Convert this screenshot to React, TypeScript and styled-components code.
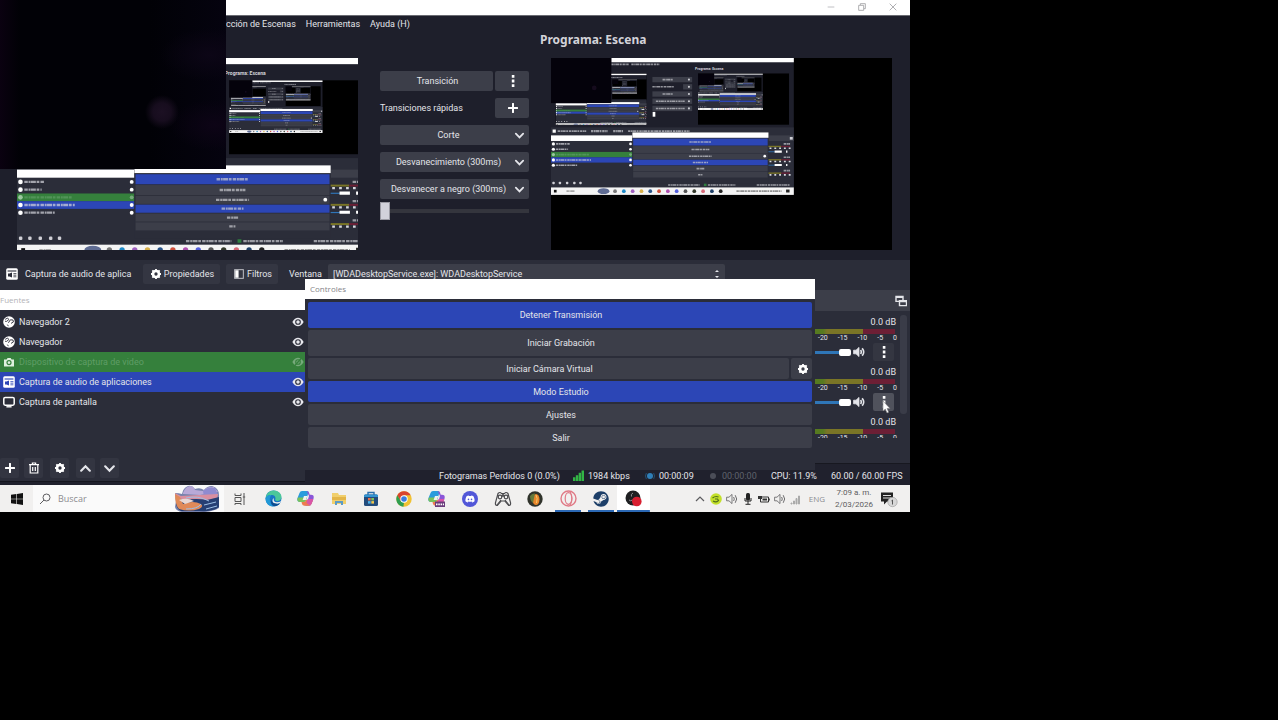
import React from "react";
import styled, { createGlobalStyle, css } from "styled-components";
import { FaDiscord, FaSteam } from "react-icons/fa";

const c = {
  base: "#1e1f2b",
  dock: "#2b2d39",
  button: "#3c3e49",
  blue: "#2c46b6",
  green: "#35803c",
  text: "#e4e5ea",
};

const GlobalStyle = createGlobalStyle`
  * { box-sizing: border-box; }
  body { margin: 0; background: #000; font-family: Roboto, "Open Sans", sans-serif; font-size: 9px; line-height: 12px; color: ${c.text}; }
  button, input, select { font: inherit; color: inherit; margin: 0; }
  svg { display: block; flex: none; }
  h1, h2, p, ul { margin: 0; padding: 0; font-weight: inherit; font-size: inherit; }
`;

const Page = styled.div`
  min-height: 100vh;
  padding-right: 368px;
  background: #000;
`;

const Desktop = styled.main`
  position: relative;
  min-width: 860px;
  background: ${c.base};
  overflow: hidden;
`;

const TitleBar = styled.header`
  height: 16px;
  display: flex;
  justify-content: flex-end;
  background: #fff;
  border-bottom: 1px solid #6a6b72;
`;

const WindowButton = styled.button`
  width: 31px;
  height: 14px;
  padding: 0;
  border: 0;
  background: none;
  display: grid;
  place-items: center;
  color: #a2a2a6;
`;

const WindowButtons = styled.div`
  display: flex;
  padding-right: 2px;
`;

const MenuBar = styled.nav`
  height: 16px;
  display: flex;
  align-items: center;
  gap: 10px;
  padding-left: 226px;
`;

const MenuItem = styled.button`
  padding: 0;
  border: 0;
  background: none;
  white-space: nowrap;
`;

const Camera = styled.div`
  position: absolute;
  left: 0;
  top: 0;
  width: 226px;
  height: 169px;
  z-index: 4;
  background:
    radial-gradient(circle at 162px 112px, #1c1023 0, #170d1e 9px, transparent 17px),
    radial-gradient(ellipse at 210px 55px, #0c0616 0, transparent 50px),
    radial-gradient(ellipse at 215px 125px, #0d0416 0, transparent 45px),
    linear-gradient(90deg, #0a0110 0, #010106 20px, #010106 150px, #05030f 100%);
`;

const Studio = styled.section`
  height: 228px;
  display: flex;
`;

const Pane = styled.div<{ $program?: boolean }>`
  flex: 1;
  min-width: 0;
  padding: ${(p) => (p.$program ? "0 18px 0 21px" : "0 22px 0 17px")};
`;

const PaneTitle = styled.h1`
  height: 26px;
  margin-left: -11px;
  font-family: "Noto Sans", "Open Sans", sans-serif;
  font-size: 12px;
  line-height: 16px;
  font-weight: 700;
  color: #d3d3d9;
`;

const Canvas = styled.div`
  background: #000;
  height: 192px;
  overflow: hidden;
  & > svg { width: 100%; height: 192px; }
`;

const Transitions = styled.div`
  width: 150px;
  padding: 39px 1px 0 0;
  display: flex;
  flex-direction: column;
  gap: 7px;
`;

const Row = styled.div`
  display: flex;
  align-items: center;
  gap: 2px;
`;

const Grow = styled.span`
  flex: 1;
`;

const Button = styled.button<{ $w?: number; $h?: number; $on?: boolean; $grow?: boolean }>`
  height: ${(p) => p.$h ?? 20}px;
  ${(p) => p.$w && css`width: ${p.$w}px;`}
  ${(p) => p.$grow && css`flex: 1;`}
  padding: 0 4px 0 6px;
  border: 0;
  border-radius: 2px;
  display: flex;
  align-items: center;
  justify-content: center;
  gap: 3px;
  white-space: nowrap;
  background: ${(p) => (p.$on ? c.blue : c.button)};
`;

const Fade = styled.input`
  appearance: none;
  width: 100%;
  height: 18px;
  margin-top: -4px;
  background: linear-gradient(#34353d, #34353d) center / 100% 4px no-repeat;
  &::-webkit-slider-thumb {
    appearance: none;
    width: 10px;
    height: 18px;
    border: 1px solid #9b9ba3;
    background: #d2d2da;
  }
`;

const ContextBar = styled.section`
  height: 30px;
  padding: 0 0 2px 6px;
  display: flex;
  align-items: center;
  background: ${c.dock};
`;

const ContextName = styled.h2`
  width: 107px;
  margin: 0 11px 0 7px;
  white-space: nowrap;
`;

const ContextButton = styled(Button)`
  margin-right: 6px;
  background: #343642;
`;

const WindowLabel = styled.label`
  display: flex;
  align-items: center;
  gap: 6px;
  margin-left: 5px;
`;

const SelectBox = styled.span`
  display: flex;
  align-items: center;
  width: 397px;
  padding-right: 4px;
  background: ${c.button};
  border-radius: 2px;
`;

const Select = styled.select`
  appearance: none;
  flex: 1;
  height: 20px;
  padding: 0 5px;
  border: 0;
  background: none;
`;

const Docks = styled.section`
  position: relative;
  height: 174px;
  display: flex;
  justify-content: flex-end;
  background: ${c.dock};
`;

const FloatingSources = styled.section`
  position: absolute;
  left: 0;
  top: 0;
  width: 305px;
  height: 192px;
  z-index: 2;
  display: flex;
  flex-direction: column;
  background: ${c.dock};
  border-bottom: 1px solid #15161e;
`;

const FloatingControls = styled.section`
  position: absolute;
  left: 305px;
  right: 95px;
  top: -11px;
  height: 191px;
  z-index: 3;
  background: ${c.dock};
`;

const DockTitle = styled.h2<{ $pad: number; $faint?: boolean }>`
  height: 20px;
  padding-left: ${(p) => p.$pad}px;
  line-height: 20px;
  font-family: "Open Sans", sans-serif;
  font-size: 8px;
  background: #fff;
  color: ${(p) => (p.$faint ? "#b4b4b8" : "#85858a")};
`;

const ControlList = styled.div`
  padding: 3px;
  display: flex;
  flex-direction: column;
  gap: 2px;
`;

const SourceList = styled.ul`
  flex: 1;
  padding-top: 2px;
  list-style: none;
`;

const Source = styled.li<{ $tone?: "green" | "blue" }>`
  height: 20px;
  padding: 0 1px 0 3px;
  display: flex;
  align-items: center;
  gap: 4px;
  background: ${(p) => (p.$tone === "green" ? c.green : p.$tone === "blue" ? c.blue : "none")};
  color: ${(p) => (p.$tone === "green" ? "#5f9d66" : "inherit")};
`;

const EyeButton = styled.button`
  padding: 0;
  border: 0;
  background: none;
`;

const Tools = styled.div`
  display: flex;
  gap: 5px;
  padding-bottom: 3px;
`;

const Tool = styled.button`
  width: 19px;
  height: 20px;
  padding: 0;
  border: 0;
  border-radius: 2px;
  display: grid;
  place-items: center;
  background: #333541;
  &:nth-child(3) { margin: 0 2px; }
`;

const Mixer = styled.section`
  width: 95px;
  height: 174px;
  border-bottom: 1px solid #171820;
`;

const MixerHead = styled.header`
  height: 21px;
  padding-right: 3px;
  display: flex;
  align-items: center;
  justify-content: flex-end;
  background: ${c.button};
`;

const MixerBody = styled.div`
  display: flex;
  height: 127px;
  overflow: hidden;
`;

const Channels = styled.div`
  width: 85px;
`;

const Channel = styled.div`
  height: 50px;
  padding-top: 5px;
`;

const Level = styled.p`
  padding-right: 4px;
  text-align: right;
`;

const Meter = styled.div`
  height: 5px;
  width: 80px;
  margin-top: 1px;
  background: linear-gradient(90deg, #567a20 0 8px, #7a7526 12px 48px, #6c1f35 48px);
`;

const Ticks = styled.div`
  height: 9px;
  width: 84px;
  padding: 0 2px 0 3px;
  display: flex;
  justify-content: space-between;
  font-size: 7px;
  line-height: 9px;
`;

const VolumeRow = styled.div`
  display: flex;
  align-items: center;
  height: 18px;
`;

const Volume = styled.input`
  appearance: none;
  width: 36px;
  height: 10px;
  background: linear-gradient(#2f76b8, #2f76b8) center / 100% 3px no-repeat;
  &::-webkit-slider-thumb {
    appearance: none;
    width: 12px;
    height: 7px;
    border-radius: 2px;
    background: #fff;
  }
`;

const Mute = styled.button`
  margin: 0 8px 0 2px;
  padding: 0;
  border: 0;
  background: none;
`;

const More = styled.button<{ $hover?: boolean }>`
  width: 21px;
  height: 18px;
  padding: 0;
  border: 0;
  border-radius: 2px;
  display: grid;
  place-items: center;
  background: ${(p) => (p.$hover ? "#50525c" : "#343641")};
`;

const ScrollTrack = styled.div`
  width: 7px;
  height: 99px;
  margin: 4px 0 0 0;
  border-radius: 3px;
  background: #3a3c48;
`;

const Pointer = styled.div`
  position: absolute;
  right: 19px;
  top: 110px;
  z-index: 5;
`;

const StatusBar = styled.footer`
  height: 21px;
  padding: 2px 13px 0 0;
  display: flex;
  justify-content: flex-end;
  align-items: center;
  background: #20212d;
`;

const Status = styled.span<{ $w: number; $dim?: boolean }>`
  width: ${(p) => p.$w}px;
  display: flex;
  align-items: center;
  gap: 4px;
  white-space: nowrap;
  color: ${(p) => (p.$dim ? "#5f616c" : "inherit")};
`;

const Taskbar = styled.footer`
  height: 27px;
  display: flex;
  align-items: center;
  background: #f1f0ef;
  color: #5d5d60;
  font-family: "Open Sans", sans-serif;
`;

const StartButton = styled.button`
  width: 33px;
  height: 27px;
  padding: 0;
  border: 0;
  display: grid;
  place-items: center;
  background: none;
`;

const Search = styled.label`
  width: 191px;
  height: 27px;
  padding: 0 4px 0 6px;
  display: flex;
  align-items: center;
  gap: 7px;
  background: #fafafa;
`;

const SearchInput = styled.input`
  flex: 1;
  min-width: 0;
  padding: 0;
  border: 0;
  background: none;
  &::placeholder { color: #8c8c90; opacity: 1; }
`;

const Apps = styled.div`
  width: 426px;
  display: flex;
`;

const AppButton = styled.button<{ $open?: boolean; $active?: boolean }>`
  flex: 1;
  height: 27px;
  padding: 0;
  border: 0;
  display: grid;
  place-items: center;
  background:
    ${(p) => (p.$open ? `linear-gradient(#2b68b4, #2b68b4) bottom / ${p.$active ? "100%" : "26px"} 2px no-repeat,` : "")}
    ${(p) => (p.$active ? "#fff" : "transparent")};
`;

const Tray = styled.div`
  margin-left: auto;
  padding-right: 12px;
  display: flex;
  align-items: center;
  gap: 4px;
`;

const Lang = styled.span`
  width: 22px;
  text-align: center;
  font-size: 8px;
  color: #8b8b8f;
`;

const Clock = styled.p`
  width: 44px;
  text-align: center;
  font-family: Roboto, sans-serif;
  font-size: 8px;
  line-height: 12px;
`;

/* ---------- icons ---------- */

const Svg = ({ s = 12, h, vb = 12, children }: { s?: number; h?: number; vb?: number; children: React.ReactNode }) => (
  <svg width={s} height={h ?? s} viewBox={`0 0 ${vb} ${vb}`} fill="none" stroke="currentColor" aria-hidden="true">
    {children}
  </svg>
);

const Chevron = ({ up, s = 10 }: { up?: boolean; s?: number }) => (
  <Svg s={s}><path d={up ? "M2 8 6 4l4 4" : "M2 4l4 4 4-4"} strokeWidth="2" strokeLinecap="round" /></Svg>
);
const Dots = () => (
  <Svg><path d="M4.8 0h2.6v2.8H4.8zM4.8 4.6h2.6v2.8H4.8zM4.8 9.2h2.6V12H4.8z" fill="#fff" stroke="none" /></Svg>
);
const Plus = () => <Svg s={10}><path d="M6 1v10M1 6h10" stroke="#fff" strokeWidth="2.4" strokeLinecap="round" /></Svg>;
const Gear = () => (
  <Svg s={10}>
    <circle cx="6" cy="6" r="3.6" stroke="#fff" strokeWidth="3.2" />
    <path d="M6 0v2M6 10v2M0 6h2M10 6h2M1.6 1.6l1.4 1.4M9 9l1.4 1.4M1.6 10.4 3 9M9 3l1.4-1.4" stroke="#fff" strokeWidth="2.2" />
  </Svg>
);
const Globe = () => (
  <Svg>
    <circle cx="6" cy="6" r="5.8" fill="#fff" stroke="none" />
    <path d="M2.2 3.4 4.6 2l1.2 1.6L3.6 5.4 2 5.2M5.4 6.8l2-3 2.6.2.4 2-2.4 1.4M4.4 8.6l1 1.6" stroke={c.dock} strokeWidth="0.9" />
  </Svg>
);
const CameraIcon = () => (
  <Svg>
    <path d="M1 3.4h2.6L4.6 2h3l1 1.4H11v7H1z" fill="#dff0df" stroke="none" />
    <circle cx="6" cy="6.6" r="2" stroke={c.green} strokeWidth="1.2" />
  </Svg>
);
const AudioIcon = ({ bg }: { bg: string }) => (
  <Svg>
    <rect x="0.2" y="0.2" width="11.6" height="11.6" rx="1.5" fill="#fff" stroke="none" />
    <path d="M1.600 3h8.800" stroke={bg} strokeWidth="1.1" />
    <path d="M2 5.600h1.500L6 4.600v4.800L3.500 8.400H2z" fill={bg} stroke="none" />
    <path d="M7.400 5.600h3M7.400 7.200h3M7.400 8.800h3" stroke={bg} strokeWidth="0.8" />
  </Svg>
);
const Monitor = () => (
  <Svg>
    <rect x="0.8" y="1.4" width="10.4" height="7.8" rx="1.4" stroke="#fff" strokeWidth="1.5" />
    <path d="M3.4 10.8h5.2" stroke="#fff" strokeWidth="1.4" />
  </Svg>
);
const Eye = ({ off }: { off?: boolean }) => (
  <Svg s={12}>
    <path d="M0.4 6C2 2.800 4 1.800 6 1.800S10 2.800 11.600 6C10 9.200 8 10.200 6 10.200S2 9.200 .4 6z" fill={off ? "#76a97b" : "#e8e8ee"} stroke="none" />
    <circle cx="6" cy="6" r="2.300" stroke={off ? c.green : c.dock} strokeWidth="1.1" />
    {off && <path d="M2 10.5 10 1.5" stroke={c.green} strokeWidth="1.3" />}
  </Svg>
);
const Trash = () => (
  <Svg s={12}><path d="M1 2.6h10M4.4 2.4V1h3.200v1.4M2.2 3v8h7.600V3M4.700 5v4M7.300 5v4" stroke="#fff" strokeWidth="1.2" /></Svg>
);
const FilterIcon = () => (
  <Svg s={10}>
    <rect x="0.8" y="0.8" width="10.4" height="10.4" stroke="#bfc0c6" strokeWidth="1.2" />
    <path d="M1.5 1.5h4v9h-4z" fill="#fff" stroke="none" />
  </Svg>
);
const Popout = () => (
  <Svg>
    <path d="M1 1.4h7v5H1zM1 2.2h7" strokeWidth="1.4" />
    <path d="M4.5 5.6h7v5h-7zM4.5 6.6h7" strokeWidth="1.4" fill={c.button} />
  </Svg>
);
const Speaker = ({ bold = true }: { bold?: boolean }) => (
  <Svg>
    <path d="M.6 4.2H3L6 1.4v9.2L3 7.8H.6z" fill={bold ? "currentColor" : "none"} strokeWidth="0.8" />
    <path d="M7.6 4q1.4 2 0 4M9.2 2.2q3 3.8 0 7.6" strokeWidth={bold ? 1.6 : 0.9} />
  </Svg>
);
const SpinArrows = () => (
  <Svg s={8} h={12}><path d="M3 3 6 0 9 3zM3 9 6 12 9 9z" fill="currentColor" stroke="none" /></Svg>
);
const Signal = () => (
  <Svg s={11}><path d="M0 8h2.6v4H0zM3.1 5.6h2.6V12H3.1zM6.2 3h2.6v9H6.2zM9.3.6H12V12H9.3z" fill="#32b545" stroke="none" /></Svg>
);
const Dot = ({ color, ring }: { color: string; ring?: string }) => (
  <Svg s={10}>
    <circle cx="6" cy="6" r="3.6" fill={color} stroke="none" />
    {ring && <path d="M1.6 2.5q-2 3.5 0 7M10.4 2.5q2 3.5 0 7" stroke={ring} />}
  </Svg>
);

/* ---------- scaled-down capture of the desktop ---------- */

const Scribble = ({ x, y, w, color = "#c9cad0", t = 6 }: { x: number; y: number; w: number; color?: string; t?: number }) => (
  <path d={`M${x} ${y}h${w}`} stroke={color} strokeWidth={t} strokeDasharray="9 2 5 1 13 2 7 3" opacity="0.7" />
);

const Capture = ({ depth, title }: { depth: number; title?: boolean }) => (
  <g>
    <rect width="910" height="513" fill={c.base} />
    <rect x="226" width="684" height="16" fill="#fff" />
    <Scribble x={226} y={24} w={65} />
    <Scribble x={301} y={24} w={105} />
    {title ? (
      <text x="540" y="45" fontSize="13" fontWeight="700" fill="#d3d3d9">Programa: Escena</text>
    ) : (
      <Scribble x={540} y={40} w={111} t={9} />
    )}
    <rect x="17" y="58" width="341" height="192" />
    <rect x="551" y="58" width="341" height="192" />
    {depth > 0 && (
      <>
        <svg x="17" y="58" width="341" height="192" viewBox="0 0 886 499"><Capture depth={depth - 1} /></svg>
        <svg x="551" y="58" width="341" height="192" viewBox="0 0 1278 720"><Capture depth={depth - 1} /></svg>
      </>
    )}
    <rect width="226" height="169" fill="#04020b" />
    <circle cx="162" cy="112" r="9" fill="#150b1d" />
    {[71, 98, 125, 152, 179].map((y, i) => (
      <g key={y}>
        <rect x={i === 1 ? 495 : 380} y={y} width={i === 1 ? 34 : 149} height="20" fill={c.button} />
        <Scribble x={i === 1 ? 380 : i > 2 ? 393 : 418} y={y + 10} w={i === 1 ? 80 : i > 2 ? 108 : 38} />
        <circle cx="517" cy={y + 10} r="4" fill="#c9cad0" />
      </g>
    ))}
    <rect x="381" y="202" width="10" height="18" fill="#fff" />
    <rect y="260" width="910" height="225" fill={c.dock} />
    <rect x="6" y="268" width="12" height="12" fill="#fff" />
    <Scribble x={25} y={274} w={107} />
    <Scribble x={150} y={274} w={62} t={8} />
    <Scribble x={233} y={274} w={37} t={8} />
    <Scribble x={289} y={274} w={230} />
    <rect x="815" y="290" width="95" height="21" fill={c.button} />
    <rect x="895" y="296" width="11" height="10" fill="#d0d0d6" />
    <rect y="290" width="305" height="21" fill="#fff" />
    <rect y="352" width="305" height="20" fill={c.green} />
    <rect y="372" width="305" height="20" fill={c.blue} />
    {[322, 342, 362, 382, 402].map((y, i) => (
      <g key={y}>
        <circle cx="9" cy={y} r="6" fill={i === 2 ? "#9bc79f" : "#fff"} />
        <Scribble x={19} y={y} w={[52, 45, 125, 131, 79][i]} color={i === 2 ? "#5f9d66" : "#d6d7de"} />
        <circle cx="298" cy={y} r="5" fill={i === 2 ? "#76a97b" : "#fff"} />
      </g>
    ))}
    {[9, 33, 60, 87, 110].map((x) => <rect key={x} x={x - 4} y="464" width="9" height="9" rx="3" fill="#d0d0d6" />)}
    <rect x="305" y="279" width="510" height="191" fill={c.dock} />
    <rect x="305" y="279" width="510" height="20" fill="#fff" />
    {[[302, 26, 83], [330, 26, 67], [358, 21, 86], [381, 21, 57], [404, 21, 29], [427, 21, 17]].map(([y, h, w], i) => (
      <g key={y}>
        <rect x="308" y={y} width="504" height={h} fill={i === 0 || i === 3 ? c.blue : c.button} />
        <Scribble x={560 - w / 2} y={y + h / 2} w={w} />
      </g>
    ))}
    <circle cx="801" cy="368" r="5" fill="#fff" />
    {[322, 372, 422].map((y) => (
      <g key={y}>
        <Scribble x={872} y={y} w={24} />
        <rect x="815" y={y + 7} width="48" height="5" fill="#7a7526" />
        <rect x="863" y={y + 7} width="33" height="5" fill="#6c1f35" />
        <path d={`M819 ${y + 16}h80`} stroke="#d6d7de" strokeWidth="6" strokeDasharray="7 11" />
        {y < 400 && (
          <>
            <rect x="815" y={y + 28} width="24" height="3" fill="#2f76b8" />
            <path d={`M838 ${y + 29}h27M881 ${y + 29}h5`} stroke="#fff" strokeWidth="8" />
          </>
        )}
      </g>
    ))}
    <Scribble x={439} y={476} w={118} />
    <rect x="573" y="471" width="10" height="9" fill="#32b545" opacity="0.6" />
    <Scribble x={588} y={476} w={103} />
    <Scribble x={771} y={476} w={126} />
    <rect y="485" width="910" height="28" fill="#f4f4f4" />
    <rect x="11" y="494" width="10" height="10" fill="#111" />
    <Scribble x={58} y={499} w={30} color="#888" />
    <ellipse cx="197" cy="499" rx="22" ry="11" fill="#5f6c93" />
    {["#777", "#1d8ac8", "#a060c0", "#d8b04a", "#28538a", "#d0503c", "#b050b0", "#5560dd", "#555", "#33382a", "#d86a78", "#1d3f68", "#222"].map((f, i) => (
      <circle key={i} cx={240 + i * 33} cy="499" r="7" fill={f} />
    ))}
    <Scribble x={695} y={499} w={170} color="#666" />
    <rect x="881" y="493" width="13" height="11" fill="#222" />
  </g>
);

/* ---------- taskbar drawings ---------- */

const SearchArt = () => (
  <svg width="46" height="27" viewBox="0 0 46 27" aria-hidden="true">
    <path d="M1 8q4 0 7 1Q9 3 14 1q4-1 7 3 5-2 9 1 3-4 8-4 7 2 7 9v13q-5 3-14 4H8q-6-1-7-5l1-6z" fill="#7783ad" />
    <path d="M9 8q2-6 7-7 4 0 5 4l8 1q5-5 11-4l4 5-18 3-17-1z" fill="#b8a9d8" />
    <path d="M29 6q5-5 12-3l3 7-14 2z" fill="#8f8bd0" />
    <path d="M1 8l6 3 18-1 19-1-1 5-21 2-20-3z" fill="#d98fa0" />
    <path d="M2 12l5 3q17-2 26 0l12-3v10q-6 5-20 4H7q-6-2-5-14z" fill="#263f73" />
    <path d="M1 9l5 3 3 7q10-4 18 0 3 3-2 5-10 3-20 0-4-4-4-15z" fill="#e08a58" />
    <path d="M5 15q8-3 15 1l-9 3z" fill="#e9d9d4" />
    <path d="M12 13q12-3 23 3M12 24q12 0 15-5M30 20l12-3M32 24l11-3" stroke="#9ec0e6" fill="none" />
  </svg>
);

const Windows = () => (
  <svg width="12" height="12" viewBox="0 0 12 12"><path d="M0 1.8 5.4 1v4.7H0zM6 .9 12 0v5.7H6zM0 6.3h5.4V11L0 10.2zM6 6.3h6V12l-6-.9z" fill="#111" /></svg>
);
const TaskView = () => (
  <Svg><path d="M1 .5v2h6v-2M1 4.5h6v4H1zM1 12v-1.5h6V12M10 0v12M8.8 4h2.4" stroke="#555" /></Svg>
);
const Edge = () => (
  <svg width="17" height="17" viewBox="0 0 17 17">
    <circle cx="8.5" cy="8.5" r="8" fill="#1976c5" />
    <path d="M.6 8.5C1 3.5 4.5.5 8.800.5c4.500 0 7.700 3 7.700 6.500 0 2.500-2 4-4.300 4-1.800 0-2.500-.8-1.800-1.900C11 6.500 9 5 6.500 5 3.500 5 1 6.500.6 8.500z" fill="#4bc79a" />
    <path d="M.6 8.5C1.500 5.500 4 4.600 6.500 5 4 7 4 13 8.500 16.500 4 16.500.3 13 .6 8.500z" fill="#2198d6" />
    <path d="M9 8q-1.500 4 3 4.300 2.500 0 4-1.300l-.5 1.500-3 1.500Q8 14 7.500 11 7.300 9 9 8z" fill="#f1f0ef" />
    <path d="M7 9c-1 3 1.500 5.500 8 4.500-2 2.300-4.500 3-6.500 2.600C5.500 14 5.500 11 7 9z" fill="#0d4d92" />
  </svg>
);
const Copilot = ({ badge }: { badge?: boolean }) => (
  <svg width="17" height="17" viewBox="0 0 17 17">
    <path d="M5 1h5q2 0 1.400 2L9 10q-.6 2-2.500 2H3q-3.500 0-2.500-4L2.500 3Q3.200 1 5 1z" fill="#2b9bdc" />
    <path d="M1 7.500h8.800L9 10q-.6 2-2.500 2H3Q.2 12 .4 9z" fill="#7cc25a" />
    <path d="M9.500 1q2 0 2.500 1.500l.7 2.200H14q3.500 0 2.500 4l-2 5q-.7 2-2.500 2H7q2 0 2.700-2L12 6 10.500 3Q10 1 9.500 1z" fill="#8a56d8" />
    <path d="M15.800 10.500l-1.300 3.200q-.7 2-2.500 2H7.500q-2 0-2.500-1.600L4.500 12h2q2 0 2.500-2z" fill="#ee7b4f" />
    <path d="M10.500 9h5.800l-1.800 4.700q-.5 1.300-1.500 1.700L9.500 13z" fill="#d955a8" />
    <path d="M7 6h3.300l-1.500 4H5.600z" fill="#f1f0ef" />
    {badge && <path d="M7 11.500h10V17H7z" fill="#6b3c7c" />}
    {badge && <path d="M8 14.300h8" stroke="#fff" strokeWidth="1.8" strokeDasharray="1.5 0.8" />}
  </svg>
);
const Folder = () => (
  <svg width="16" height="14" viewBox="0 0 16 14">
    <path d="M1 1h6l1 2h7v9H1z" fill="#f1cf6c" />
    <path d="M1 5h14v3H1z" fill="#e3b548" />
    <path d="M4 13V9h8v4h-2v-2H6v2z" fill="#5c9bc7" />
  </svg>
);
const Store = () => (
  <svg width="16" height="16" viewBox="0 0 16 16">
    <path d="M5 4V1.5h6V4" fill="none" stroke="#2a6fae" strokeWidth="1.4" />
    <rect x="1" y="3.5" width="14" height="11.5" rx="1.5" fill="#234c7c" />
    <path d="M1 4.500Q1 3.500 2.500 3.500h11q1.500 0 1.500 1V6H1z" fill="#3294d2" />
    <path d="M5 7h2.700v2.500H5z" fill="#e96f4d" /><path d="M8.300 7H11v2.500H8.300z" fill="#84c25a" />
    <path d="M5 10.100h2.700v2.500H5z" fill="#4cb1e8" /><path d="M8.300 10.100H11v2.500H8.300z" fill="#f3c84d" />
  </svg>
);
const Chrome = () => (
  <svg width="16" height="16" viewBox="0 0 16 16">
    <circle cx="8" cy="8" r="7.7" fill="#f1c232" />
    <path d="M1.3 4.2A7.7 7.7 0 0 1 14.700 4.200H8L4.700 10z" fill="#d9442f" />
    <path d="M1.300 4.200 4.700 10 8 11.500l-.6 4.200A7.700 7.700 0 0 1 1.300 4.200z" fill="#2f9e50" />
    <circle cx="8" cy="8" r="3.7" fill="#fff" /><circle cx="8" cy="8" r="2.8" fill="#3a7de0" />
  </svg>
);
const Discord = () => (
  <svg width="16" height="16" viewBox="0 0 16 16"><circle cx="8" cy="8" r="8" fill="#5257d8" /><FaDiscord x={3} y={3} size={10} color="#fff" /></svg>
);
const Gamepad = () => (
  <svg width="18" height="16" viewBox="0 0 18 16" fill="none" stroke="#4c4c4f" strokeWidth="1.2">
    <path d="M4 2.5q2-2 3.500 0h3q1.500-2 3.500 0l2.500 9q.5 3.500-2 2.800L11 10H7l-3.500 4.300q-2.500.7-2-2.800z" />
    <circle cx="6" cy="6" r="1.8" /><circle cx="12" cy="6" r="1.8" />
    <path d="M8 3.5 10 5.500M10 3.500 8 5.500M3 14 7 9M15 14 11 9" />
  </svg>
);
const FruityLoops = () => (
  <svg width="16" height="16" viewBox="0 0 16 16">
    <circle cx="8" cy="8" r="7.7" fill="#30332b" />
    <ellipse cx="9" cy="8.5" rx="3.5" ry="5.5" fill="#e8862a" />
    <path d="M3 5q2-3 5-2.500L6 12Q3 10 3 5z" fill="#64793b" />
    <path d="M9 4q2 3 .5 8" stroke="#f7c76a" fill="none" />
  </svg>
);
const Opera = () => (
  <svg width="17" height="17" viewBox="0 0 17 17" fill="none" stroke="#e07a86">
    <circle cx="8.5" cy="8.5" r="7.5" strokeWidth="1.4" /><ellipse cx="8.500" cy="8.500" rx="3.300" ry="5.800" strokeWidth="1.2" />
    <path d="M10 1.5q4 7 0 14" />
  </svg>
);
const Obs = () => (
  <svg width="17" height="17" viewBox="0 0 17 17">
    <circle cx="8" cy="8" r="7.5" fill="#1f2022" />
    <path d="M8 3Q5.500 4 6.500 6.500M4 10q1.500 1.500 3.500 0" stroke="#8f8f93" strokeWidth="1" fill="none" />
    <circle cx="11.8" cy="11.5" r="4.8" fill="#d81f30" />
  </svg>
);
const Nvidia = () => (
  <svg width="12" height="12" viewBox="0 0 12 12"><circle cx="6" cy="6" r="5.8" fill="#c3e02a" /><path d="M2.500 5q3-2.500 6-1M3 8q3 2 5.500-.5L7.500 6H5" stroke="#51701c" strokeWidth="1.1" fill="none" /></svg>
);
const Mic = () => <Svg><rect x="4" y="0" width="4" height="7.5" rx="1.5" fill="#222" stroke="none" /><path d="M3 5v3h6V5M6 8v3M3.5 11.300h5" stroke="#222" /></Svg>;
const Battery = () => <Svg><path d="M2.5 4h8v5h-8zM11.3 5.5v2" stroke="#333" /><path d="M4.5 5.500H9v2H4.500zM0 3h4v3H0z" fill="#333" stroke="none" /></Svg>;
const Wifi = () => <Svg><path d="M1 10h1v1H1zM3.5 8h1v3h-1zM6 5.5h1V11H6zM8.5 3h1v8h-1z" fill="#aaa" stroke="#aaa" /></Svg>;
const Notifications = () => (
  <svg width="18" height="18" viewBox="0 0 18 18">
    <path d="M1 2.5h12v9H7l-3 3v-3H1z" fill="#222" /><path d="M3 5.5h8M3 8h8" stroke="#ddd" />
    <circle cx="12.5" cy="12" r="4.7" fill="#d7d7d7" stroke="#999" strokeWidth="0.6" />
    <path d="M12.5 14.5V10l-1 .8" fill="none" stroke="#555" />
  </svg>
);

const sources = [
  { name: "Navegador 2", icon: <Globe /> },
  { name: "Navegador", icon: <Globe /> },
  { name: "Dispositivo de captura de video", icon: <CameraIcon />, tone: "green" as const },
  { name: "Captura de audio de aplicaciones", icon: <AudioIcon bg={c.blue} />, tone: "blue" as const },
  { name: "Captura de pantalla", icon: <Monitor /> },
];

const apps = [
  { name: "Vista de tareas", icon: <TaskView /> },
  { name: "Edge", icon: <Edge /> },
  { name: "Copilot", icon: <Copilot /> },
  { name: "Explorador", icon: <Folder /> },
  { name: "Store", icon: <Store /> },
  { name: "Chrome", icon: <Chrome /> },
  { name: "Microsoft 365", icon: <Copilot badge /> },
  { name: "Discord", icon: <Discord /> },
  { name: "Mando", icon: <Gamepad /> },
  { name: "FL Studio", icon: <FruityLoops /> },
  { name: "Opera", icon: <Opera />, open: true },
  { name: "Steam", icon: <FaSteam size={16} color="#1d3f68" />, open: true },
  { name: "OBS", icon: <Obs />, open: true, active: true },
];

export default function App() {
  return (
    <Page>
      <GlobalStyle />
      <Desktop>
        <TitleBar>
          <WindowButtons>
            <WindowButton aria-label="Minimizar"><Svg s={8}><path d="M1 6h10" /></Svg></WindowButton>
            <WindowButton aria-label="Restaurar"><Svg s={8}><path d="M1 3.5h7.5V11H1zM3.5 3V1H11v7.5H9" strokeWidth="1.3" /></Svg></WindowButton>
            <WindowButton aria-label="Cerrar"><Svg s={8}><path d="M1 1l10 10M11 1 1 11" strokeWidth="1.3" /></Svg></WindowButton>
          </WindowButtons>
        </TitleBar>
        <MenuBar>
          <MenuItem>cción de Escenas</MenuItem>
          <MenuItem>Herramientas</MenuItem>
          <MenuItem>Ayuda (H)</MenuItem>
        </MenuBar>
        <Camera />

        <Studio>
          <Pane>
            <PaneTitle />
            <Canvas>
              <svg viewBox="0 0 886 499" preserveAspectRatio="xMinYMin slice"><Capture depth={2} title /></svg>
            </Canvas>
          </Pane>
          <Transitions>
            <Row>
              <Button $grow>Transición</Button>
              <Button $w={34} aria-label="Opciones de transición"><Dots /></Button>
            </Row>
            <Row>
              <Grow>Transiciones rápidas</Grow>
              <Button $w={34} aria-label="Añadir transición"><Plus /></Button>
            </Row>
            {["Corte", "Desvanecimiento (300ms)", "Desvanecer a negro (300ms)"].map((t) => (
              <Button key={t}><Grow>{t}</Grow><Chevron s={11} /></Button>
            ))}
            <Fade type="range" defaultValue={0} aria-label="Barra de transición" />
          </Transitions>
          <Pane $program>
            <PaneTitle>Programa: Escena</PaneTitle>
            <Canvas>
              <svg viewBox="0 0 1278 720" preserveAspectRatio="xMinYMin slice"><Capture depth={2} title /></svg>
            </Canvas>
          </Pane>
        </Studio>

        <ContextBar>
          <AudioIcon bg={c.dock} />
          <ContextName>Captura de audio de aplica</ContextName>
          <ContextButton $w={77}><Gear />Propiedades</ContextButton>
          <ContextButton $w={52}><FilterIcon />Filtros</ContextButton>
          <WindowLabel>
            Ventana
            <SelectBox>
              <Select><option>[WDADesktopService.exe]: WDADesktopService</option></Select>
              <SpinArrows />
            </SelectBox>
          </WindowLabel>
        </ContextBar>

        <Docks>
          <FloatingSources>
            <DockTitle $pad={0} $faint>Fuentes</DockTitle>
            <SourceList>
              {sources.map((s) => (
                <Source key={s.name} $tone={s.tone}>
                  {s.icon}
                  <Grow>{s.name}</Grow>
                  <EyeButton aria-label={`Visibilidad de ${s.name}`}><Eye off={s.tone === "green"} /></EyeButton>
                </Source>
              ))}
            </SourceList>
            <Tools>
              <Tool aria-label="Añadir fuente"><Plus /></Tool>
              <Tool aria-label="Eliminar fuente"><Trash /></Tool>
              <Tool aria-label="Propiedades de la fuente"><Gear /></Tool>
              <Tool aria-label="Subir"><Chevron up s={13} /></Tool>
              <Tool aria-label="Bajar"><Chevron s={13} /></Tool>
            </Tools>
          </FloatingSources>

          <FloatingControls>
            <DockTitle $pad={5}>Controles</DockTitle>
            <ControlList>
              <Button $h={26} $on>Detener Transmisión</Button>
              <Button $h={26}>Iniciar Grabación</Button>
              <Row>
                <Button $h={21} $grow>Iniciar Cámara Virtual</Button>
                <Button $h={21} $w={21} aria-label="Configurar cámara virtual"><Gear /></Button>
              </Row>
              <Button $h={21} $on>Modo Estudio</Button>
              <Button $h={21}>Ajustes</Button>
              <Button $h={21}>Salir</Button>
            </ControlList>
          </FloatingControls>

          <Mixer>
            <MixerHead><Popout /></MixerHead>
            <MixerBody>
              <Channels>
                {[0, 1, 2].map((i) => (
                  <Channel key={i}>
                    <Level>0.0 dB</Level>
                    <Meter />
                    <Ticks>{["-20", "-15", "-10", "-5", "0"].map((t) => <span key={t}>{t}</span>)}</Ticks>
                    <VolumeRow>
                      <Volume type="range" defaultValue={100} aria-label={`Volumen ${i + 1}`} />
                      <Mute aria-label={`Silenciar ${i + 1}`}><Speaker /></Mute>
                      <More $hover={i === 1} aria-label={`Opciones ${i + 1}`}><Dots /></More>
                    </VolumeRow>
                  </Channel>
                ))}
              </Channels>
              <ScrollTrack />
            </MixerBody>
          </Mixer>
          <Pointer>
            <svg width="9" height="14" viewBox="0 0 9 14"><path d="M1 1v10l2.3-2 1.7 4 1.7-.8L5 8.5h3z" fill="#fff" stroke="#777" strokeWidth="0.5" /></svg>
          </Pointer>
        </Docks>

        <StatusBar>
          <Status $w={134}>Fotogramas Perdidos 0 (0.0%)</Status>
          <Status $w={72}><Signal />1984 kbps</Status>
          <Status $w={63}><Dot color="#2f7fb8" ring="#245b86" />00:00:09</Status>
          <Status $w={63} $dim><Dot color="#4b4d58" />00:00:00</Status>
          <Status $w={60}>CPU: 11.9%</Status>
          <Status $w={66}>60.00 / 60.00 FPS</Status>
        </StatusBar>

        <Taskbar>
          <StartButton aria-label="Inicio"><Windows /></StartButton>
          <Search>
            <Svg><circle cx="7.5" cy="4.5" r="3.5" /><path d="M5 7 1 11" /></Svg>
            <SearchInput placeholder="Buscar" aria-label="Buscar" />
            <SearchArt />
          </Search>
          <Apps>
            {apps.map((a) => (
              <AppButton key={a.name} aria-label={a.name} $open={a.open} $active={a.active}>{a.icon}</AppButton>
            ))}
          </Apps>
          <Tray>
            <Svg><path d="M2 8l4-4 4 4" strokeWidth="1.2" /></Svg>
            <Nvidia />
            <Speaker bold={false} />
            <Mic />
            <Battery />
            <Speaker bold={false} />
            <Wifi />
            <Lang>ENG</Lang>
            <Clock>7:09 a. m.<br />2/03/2026</Clock>
            <Notifications />
          </Tray>
        </Taskbar>
      </Desktop>
    </Page>
  );
}
